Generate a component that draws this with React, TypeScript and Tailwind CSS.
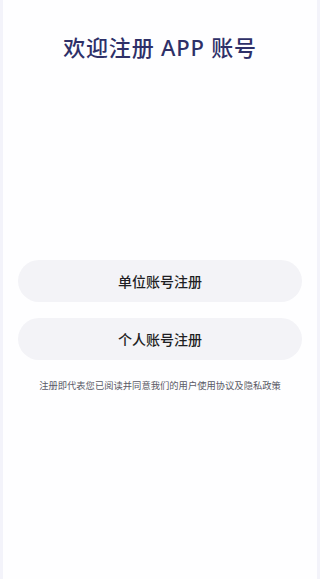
const font = { fontFamily: '"Noto Sans", "Noto Sans CJK SC", sans-serif' };

function RegisterButton({ label }: { label: string }) {
  return (
    <button className="h-[42px] w-full rounded-full bg-[#f3f3f7] text-[14px] font-medium text-[#1f1f24]">
      {label}
    </button>
  );
}

export default function App() {
  return (
    <div
      className="flex h-[579px] w-[320px] flex-col border-x-[3px] border-[#f3f3fa] bg-[#fefeff]"
      style={font}
    >
      <h1 className="mt-[32px] text-center text-[22px] font-medium leading-[30px] tracking-[0.8px] text-[#2e3068]">
        欢迎注册 APP 账号
      </h1>
      <div className="mt-[198px] flex flex-col gap-[16px] px-[15px]">
        <RegisterButton label="单位账号注册" />
        <RegisterButton label="个人账号注册" />
      </div>
      <p className="mt-[19px] text-center text-[9.3px] text-[#5a5a66]">
        注册即代表您已阅读并同意我们的用户使用协议及隐私政策
      </p>
    </div>
  );
}
